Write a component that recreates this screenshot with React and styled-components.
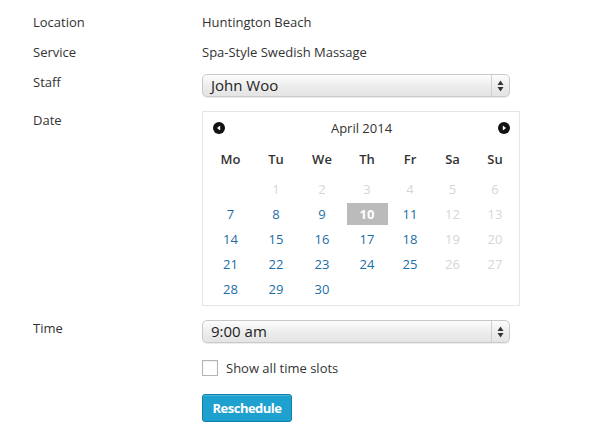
import React from 'react';
import styled, { createGlobalStyle } from 'styled-components';

const GlobalStyle = createGlobalStyle`
  html, body {
    margin: 0;
    padding: 0;
    background: #fff;
  }
  body {
    font-family: "Open Sans", "Liberation Sans", sans-serif;
    font-size: 13px;
    color: #333;
  }
`;

const weekDays = ['Mo', 'Tu', 'We', 'Th', 'Fr', 'Sa', 'Su'];
const colWidths = [45, 46, 46, 44, 42, 43, 42];

// April 2014, weeks starting on Monday
const weeks = [
  [null, 1, 2, 3, 4, 5, 6],
  [7, 8, 9, 10, 11, 12, 13],
  [14, 15, 16, 17, 18, 19, 20],
  [21, 22, 23, 24, 25, 26, 27],
  [28, 29, 30, null, null, null, null],
];
const available = [7, 8, 9, 11, 14, 15, 16, 17, 18, 21, 22, 23, 24, 25, 28, 29, 30];
const selected = 10;

const App = () => (
  <>
    <GlobalStyle />
    <Form>
      <Row $mb={10}>
        <Label>Location</Label>
        <Value>Huntington Beach</Value>
      </Row>
      <Row $mb={10}>
        <Label>Service</Label>
        <Value>Spa-Style Swedish Massage</Value>
      </Row>
      <Row $mb={13}>
        <Label>Staff</Label>
        <Select>
          <SelectText>John Woo</SelectText>
          <SelectArrows>
            <Arrows />
          </SelectArrows>
        </Select>
      </Row>
      <Row $mb={12}>
        <Label>Date</Label>
        <Calendar>
          <CalHeader>
            <NavButton aria-label="Previous month">
              <NavIcon dir="left" />
            </NavButton>
            <Month>April 2014</Month>
            <NavButton aria-label="Next month">
              <NavIcon dir="right" />
            </NavButton>
          </CalHeader>
          <DayGrid>
            {weekDays.map(d => (
              <DayName key={d}>{d}</DayName>
            ))}
          </DayGrid>
          <Weeks>
            {weeks.map((week, i) => (
              <DayGrid key={i} $rowHeight={25}>
                {week.map((d, j) => (
                  <DayCell key={j}>
                    {d && (
                      <Day
                        $selected={d === selected}
                        $off={d !== selected && !available.includes(d)}
                      >
                        {d}
                      </Day>
                    )}
                  </DayCell>
                ))}
              </DayGrid>
            ))}
          </Weeks>
        </Calendar>
      </Row>
      <Row $mb={16}>
        <Label>Time</Label>
        <Select>
          <SelectText>9:00 am</SelectText>
          <SelectArrows>
            <Arrows />
          </SelectArrows>
        </Select>
      </Row>
      <Row $mb={17}>
        <Label />
        <CheckRow>
          <Checkbox />
          <span>Show all time slots</span>
        </CheckRow>
      </Row>
      <Row>
        <Label />
        <Button>Reschedule</Button>
      </Row>
    </Form>
  </>
);

const Arrows = () => (
  <svg width="7" height="12" viewBox="0 0 7 12">
    <path d="M3.5 0.5 L6.5 5 L0.5 5 Z" fill="#333" />
    <path d="M3.5 11.5 L6.5 7 L0.5 7 Z" fill="#333" />
  </svg>
);

const NavIcon = ({ dir }) => (
  <svg width="12" height="12" viewBox="0 0 12 12">
    <circle cx="6" cy="6" r="6" fill="#111" />
    {dir === 'left' ? (
      <path d="M4 6 L7.2 3.4 L7.2 8.6 Z" fill="#fff" />
    ) : (
      <path d="M8 6 L4.8 3.4 L4.8 8.6 Z" fill="#fff" />
    )}
  </svg>
);

const Form = styled.div`
  padding: 12px 0 20px 33px;
`;

const Row = styled.div`
  display: flex;
  align-items: flex-start;
  margin-bottom: ${p => p.$mb || 0}px;
`;

const Label = styled.div`
  width: 169px;
  flex: none;
  line-height: 20px;
  color: #333;
`;

const Value = styled.div`
  line-height: 20px;
  color: #333;
`;

const Select = styled.div`
  margin-top: 2px;
  width: 308px;
  height: 23px;
  box-sizing: border-box;
  display: flex;
  align-items: center;
  border: 1px solid #c9c9c9;
  border-radius: 5px;
  background: linear-gradient(#fdfdfd, #ececec 55%, #e4e4e4);
  box-shadow: 0 1px 1px rgba(0, 0, 0, 0.08);
`;

const SelectText = styled.div`
  flex: 1;
  padding-left: 8px;
  font-size: 15px;
  color: #222;
  line-height: 21px;
`;

const SelectArrows = styled.div`
  width: 17px;
  height: 100%;
  display: flex;
  align-items: center;
  justify-content: center;
  border-left: 1px solid #cfcfcf;
`;

const Calendar = styled.div`
  margin-top: 1px;
  width: 318px;
  box-sizing: border-box;
  border: 1px solid #e6e6e6;
  padding: 6px 3px 4px 5px;
`;

const CalHeader = styled.div`
  height: 20px;
  display: flex;
  align-items: center;
  justify-content: space-between;
  padding: 0 6px 0 5px;
  margin-bottom: 11px;
`;

const NavButton = styled.span`
  display: flex;
  cursor: pointer;
`;

const Month = styled.div`
  color: #333;
  font-size: 13px;
`;

const DayGrid = styled.div`
  display: grid;
  grid-template-columns: ${colWidths.map(w => `${w}px`).join(' ')};
  height: ${p => p.$rowHeight || 20}px;
  align-items: center;
`;

const Weeks = styled.div`
  margin-top: 7px;
`;

const DayName = styled.div`
  text-align: center;
  font-weight: 600;
  color: #333;
`;

const DayCell = styled.div`
  display: flex;
  justify-content: center;
`;

const Day = styled.div`
  width: 41px;
  height: 22px;
  line-height: 22px;
  text-align: center;
  background: ${p => (p.$selected ? '#bbb' : 'transparent')};
  color: ${p => (p.$selected ? '#fff' : p.$off ? '#d6d6d6' : '#1b6ea6')};
  font-weight: ${p => (p.$selected ? 700 : 400)};
  cursor: ${p => (p.$off ? 'default' : 'pointer')};
`;

const CheckRow = styled.label`
  display: flex;
  align-items: center;
  gap: 8px;
  color: #333;
`;

const Checkbox = styled.span`
  width: 16px;
  height: 16px;
  box-sizing: border-box;
  border: 1px solid #b4b4b4;
  background: #fff;
  box-shadow: inset 0 1px 2px rgba(0, 0, 0, 0.07);
`;

const Button = styled.button`
  width: 90px;
  height: 28px;
  box-sizing: border-box;
  background: #1fa1cf;
  border: 1px solid #0e7fa8;
  border-radius: 3px;
  box-shadow: inset 0 1px 0 rgba(120, 200, 230, 0.5);
  color: #fff;
  font-family: "Open Sans", "Liberation Sans", sans-serif;
  font-size: 13px;
  font-weight: 700;
  letter-spacing: -0.5px;
  padding: 0;
  cursor: pointer;
`;

export default App;
